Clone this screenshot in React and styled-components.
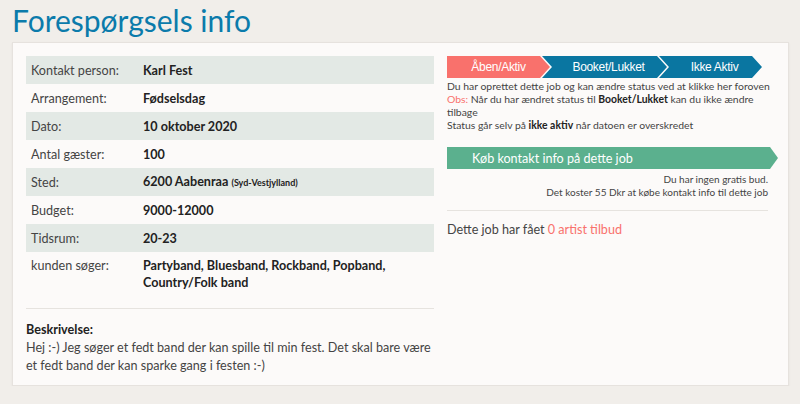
import React from "react";
import styled, { createGlobalStyle } from "styled-components";

const Global = createGlobalStyle`
  body {
    margin: 0;
    background: #f1eeea;
    font-family: Lato, "Open Sans", sans-serif;
    color: #333;
  }
`;

const Page = styled.div`
  padding: 4px 11px 0 12px;
`;

const Title = styled.h1`
  margin: 0 0 6px 0;
  font-size: 30px;
  line-height: 32px;
  font-weight: 400;
  color: #0b7bab;
`;

const Card = styled.div`
  background: #fcfaf9;
  border: 1px solid #e6e2de;
  box-shadow: 0 1px 2px rgba(0, 0, 0, 0.06);
  display: grid;
  grid-template-columns: 408px 1fr;
  column-gap: 13px;
  padding: 13px 10px 10px 13px;
`;

const Left = styled.div`
  display: flex;
  flex-direction: column;
`;

const Row = styled.div`
  display: flex;
  min-height: 28px;
  align-items: ${(p) => (p.top ? "flex-start" : "center")};
  padding: ${(p) => (p.top ? "5px 0 8px" : "0")};
  background: ${(p) => (p.shade ? "#e3e9e5" : "transparent")};
  font-size: 12.6px;
  line-height: 17px;
`;

const Label = styled.div`
  width: 112px;
  padding-left: 5px;
  flex-shrink: 0;
  color: #444;
`;

const Value = styled.div`
  font-weight: 700;
  color: #222;
`;

const Small = styled.span`
  font-size: 9px;
  font-weight: 700;
`;

const Rule = styled.hr`
  border: 0;
  border-top: 1px solid #e6e3df;
  margin: ${(p) => p.m || "9px 0 12px"};
`;

const Heading = styled.div`
  font-weight: 700;
  font-size: 12.6px;
  line-height: 18px;
  color: #222;
`;

const Desc = styled.p`
  margin: 0;
  font-size: 12.6px;
  line-height: 18px;
  color: #444;
`;

const Right = styled.div`
  display: flex;
  flex-direction: column;
`;

const Steps = styled.div`
  display: flex;
  height: 22px;
`;

const Step = styled.div`
  width: ${(p) => p.w}px;
  margin-left: ${(p) => (p.first ? 0 : -8)}px;
  background: ${(p) => (p.active ? "#f9716c" : "#0a76a1")};
  color: #fff;
  font-family: "Liberation Sans", Arial, sans-serif;
  font-size: 12px;
  letter-spacing: -0.3px;
  display: flex;
  align-items: center;
  justify-content: center;
  padding-left: ${(p) => (p.first ? 0 : 8)}px;
  box-sizing: border-box;
  clip-path: ${(p) =>
    p.first
      ? "polygon(0 0, calc(100% - 10px) 0, 100% 50%, calc(100% - 10px) 100%, 0 100%)"
      : "polygon(0 0, calc(100% - 10px) 0, 100% 50%, calc(100% - 10px) 100%, 0 100%, 10px 50%)"};
`;

const Note = styled.div`
  margin-top: 2px;
  padding-right: 8px;
  font-size: 10.4px;
  line-height: 13px;
  color: #444;
  b {
    color: #222;
  }
`;

const NoteLine = styled.div``;

const Obs = styled.span`
  color: #f9716c;
`;

const BuyButton = styled.div`
  margin-top: 15px;
  height: 22px;
  background: #5bb08e;
  color: #fff;
  font-size: 12.6px;
  display: flex;
  align-items: center;
  padding-left: 25px;
  clip-path: polygon(0 0, calc(100% - 8px) 0, 100% 50%, calc(100% - 8px) 100%, 0 100%);
`;

const Info = styled.div`
  margin-top: 4px;
  padding-right: 10px;
  text-align: right;
  font-size: 10px;
  line-height: 13px;
  color: #444;
`;

const Offers = styled.div`
  font-size: 12.6px;
  color: #444;
  span {
    color: #f9716c;
  }
`;

const rows = [
  ["Kontakt person:", "Karl Fest"],
  ["Arrangement:", "Fødselsdag"],
  ["Dato:", "10 oktober 2020"],
  ["Antal gæster:", "100"],
  ["Sted:", <>6200 Aabenraa <Small>(Syd-Vestjylland)</Small></>],
  ["Budget:", "9000-12000"],
  ["Tidsrum:", "20-23"],
];

export default function App() {
  return (
    <Page>
      <Global />
      <Title>Forespørgsels info</Title>
      <Card>
        <Left>
          {rows.map(([l, v], i) => (
            <Row key={l} shade={i % 2 === 0}>
              <Label>{l}</Label>
              <Value>{v}</Value>
            </Row>
          ))}
          <Row top>
            <Label>kunden søger:</Label>
            <Value>
              Partyband, Bluesband, Rockband, Popband,
              <br />
              Country/Folk band
            </Value>
          </Row>
          <Rule />
          <Heading>Beskrivelse:</Heading>
          <Desc>
            Hej :-) Jeg søger et fedt band der kan spille til min fest. Det skal bare være et fedt band der kan sparke gang i festen :-)
          </Desc>
        </Left>
        <Right>
          <Steps>
            <Step first active w={103}>Åben/Aktiv</Step>
            <Step w={125}>Booket/Lukket</Step>
            <Step w={103}>Ikke Aktiv</Step>
          </Steps>
          <Note>
            <NoteLine>Du har oprettet dette job og kan ændre status ved at klikke her foroven</NoteLine>
            <NoteLine>
              <Obs>Obs:</Obs> Når du har ændret status til <b>Booket/Lukket</b> kan du ikke ændre
            </NoteLine>
            <NoteLine>tilbage</NoteLine>
            <NoteLine>
              Status går selv på <b>ikke aktiv</b> når datoen er overskredet
            </NoteLine>
          </Note>
          <BuyButton>Køb kontakt info på dette job</BuyButton>
          <Info>
            Du har ingen gratis bud.
            <br />
            Det koster 55 Dkr at købe kontakt info til dette job
          </Info>
          <Rule m="11px 10px 11px 0" />
          <Offers>
            Dette job har fået <span>0 artist tilbud</span>
          </Offers>
        </Right>
      </Card>
    </Page>
  );
}
